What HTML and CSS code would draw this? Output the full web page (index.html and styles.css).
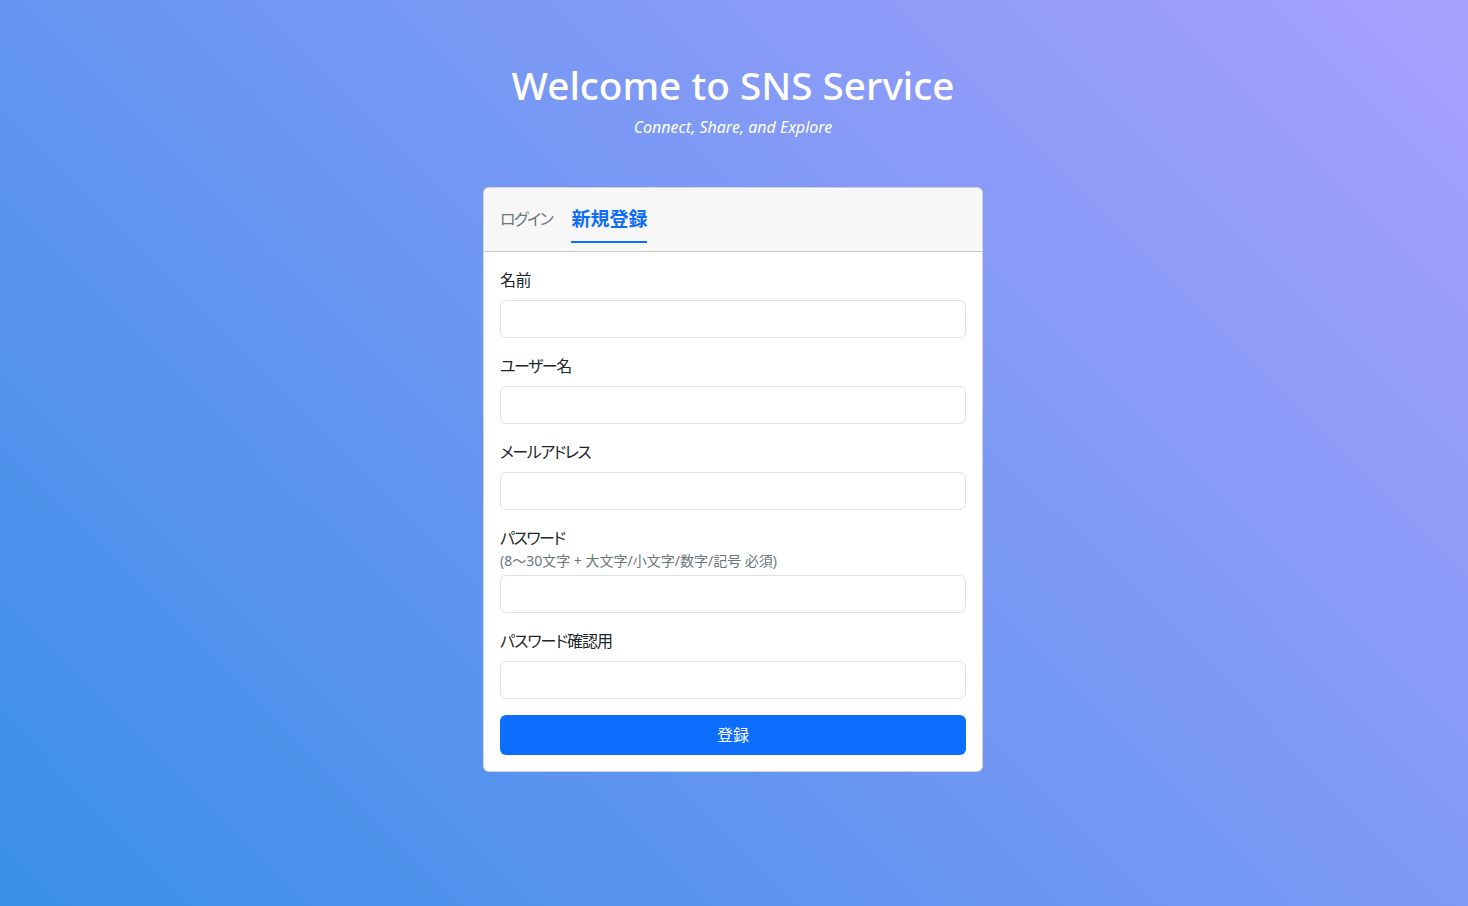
FILE: index.html
```html
<!DOCTYPE html>
<html lang="ja">
<head>
<meta charset="utf-8">
<title>SNS Service</title>
<link rel="stylesheet" href="styles.css">
</head>
<body>
<div class="page">
  <header class="hero">
    <h1 class="hero-title">Welcome to SNS Service</h1>
    <p class="hero-sub">Connect, Share, and Explore</p>
  </header>
  <div class="card">
    <div class="card-header">
      <nav class="tabs">
        <a class="tab">ログイン</a>
        <a class="tab active">新規登録</a>
      </nav>
    </div>
    <form class="card-body">
      <div class="field">
        <label class="label label-kanji">名前</label>
        <input class="input" type="text">
      </div>
      <div class="field">
        <label class="label">ユーザー名</label>
        <input class="input" type="text">
      </div>
      <div class="field">
        <label class="label">メールアドレス</label>
        <input class="input" type="email">
      </div>
      <div class="field">
        <label class="label label-tight">パスワード</label>
        <small class="hint">(8〜30文字 + 大文字/小文字/数字/記号 必須)</small>
        <input class="input" type="password">
      </div>
      <div class="field">
        <label class="label label-mixed">パスワード確認用</label>
        <input class="input" type="password">
      </div>
      <button class="btn" type="button">登録</button>
    </form>
  </div>
</div>
</body>
</html>
```
FILE: styles.css
```css
html, body {
  margin: 0;
  padding: 0;
  height: 100%;
}
body {
  background: linear-gradient(45deg, #3a8fe9 0%, #a9a0fd 100%);
  font-family: "Noto Sans", "Noto Sans CJK JP", sans-serif;
  font-feature-settings: "palt";
  color: #212529;
  font-size: 16px;
  line-height: 1.5;
}
.page {
  display: flex;
  flex-direction: column;
  align-items: center;
  padding-top: 61px;
  padding-right: 2px;
}
.hero {
  text-align: center;
  color: #fff;
}
.hero-title {
  margin: 0 0 6px;
  font-size: 38.7px;
  line-height: 48px;
  font-weight: 500;
}
.hero-sub {
  margin: 0 0 48px;
  font-style: italic;
  font-size: 16px;
  line-height: 24px;
}
.card {
  width: 500px;
  box-sizing: border-box;
  background: #fff;
  border: 1px solid rgba(0,0,0,0.175);
  border-radius: 6px;
  overflow: hidden;
}
.card-header {
  background: #f7f7f7;
  border-bottom: 1px solid rgba(0,0,0,0.175);
  padding: 16px 16px 8px;
  height: 64px;
  box-sizing: border-box;
}
.tabs {
  display: flex;
  align-items: flex-end;
  gap: 19px;
  height: 100%;
}
.tab {
  display: block;
  color: #6c757d;
  font-size: 16px;
  line-height: 30px;
  border-bottom: 2px solid transparent;
  padding-bottom: 7px;
  letter-spacing: -1.5px;
}
.tab.active {
  color: #0d6efd;
  font-size: 19px;
  font-weight: 700;
  letter-spacing: 0;
  border-bottom-color: #0d6efd;
}
.card-body {
  padding: 16px;
  display: flex;
  flex-direction: column;
}
.field {
  display: flex;
  flex-direction: column;
  margin-bottom: 16px;
}
.label {
  line-height: 24px;
  margin-bottom: 8px;
  letter-spacing: -1.5px;
}
.label-kanji {
  letter-spacing: -0.5px;
}
.label-mixed {
  letter-spacing: -1px;
}
.label-tight {
  margin-bottom: 0;
}
.hint {
  font-size: 14px;
  line-height: 21px;
  color: #6c757d;
  margin-bottom: 4px;
}
.input {
  height: 38px;
  box-sizing: border-box;
  border: 1px solid #dee2e6;
  border-radius: 6px;
  padding: 6px 12px;
  font: inherit;
  background: #fff;
}
.btn {
  height: 40px;
  border: none;
  border-radius: 6px;
  background: #0d6efd;
  color: #fff;
  font: inherit;
  font-size: 16px;
}
```
